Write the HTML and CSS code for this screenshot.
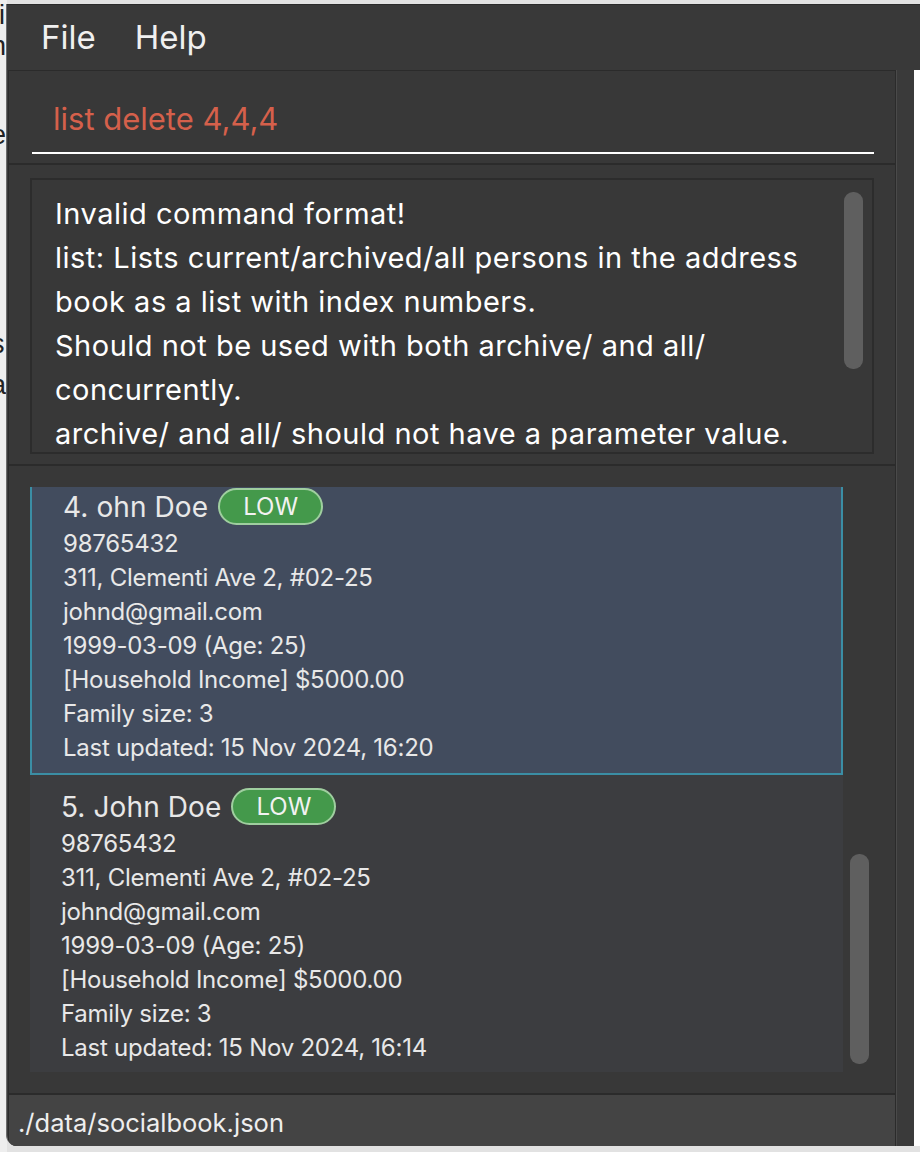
FILE: index.html
```html
<!DOCTYPE html>
<html lang="en">
<head>
<meta charset="utf-8">
<title>SocialBook</title>
<link rel="stylesheet" href="styles.css">
</head>
<body>
<div class="behind">
  <span class="b1">i</span>
  <span class="b2">n</span>
  <span class="b3">e</span>
  <span class="b4">s</span>
  <span class="b5">a</span>
</div>
<div class="window">
  <div class="menubar">
    <span class="menu-item">File</span>
    <span class="menu-item">Help</span>
  </div>
  <div class="main">
    <div class="panels">
      <div class="panel command-panel">
        <div class="command-input">list delete 4,4,4</div>
      </div>
      <div class="panel result-panel">
        <div class="result-box">
          <div class="result-text">Invalid command format!<br>list: Lists current/archived/all persons in the address<br>book as a list with index numbers.<br>Should not be used with both archive/ and all/<br>concurrently.<br>archive/ and all/ should not have a parameter value.<br>Example: list archive/</div>
          <div class="thumb result-thumb"></div>
        </div>
      </div>
      <div class="panel list-panel">
        <div class="list-view">
          <div class="cards">
            <div class="card selected">
              <div class="card-title"><span class="name">4. ohn Doe</span><span class="badge">LOW</span></div>
              <div class="fields">
                <div class="field">98765432</div>
                <div class="field">311, Clementi Ave 2, #02-25</div>
                <div class="field">johnd@gmail.com</div>
                <div class="field">1999-03-09 (Age: 25)</div>
                <div class="field">[Household Income] $5000.00</div>
                <div class="field">Family size: 3</div>
                <div class="field">Last updated: 15 Nov 2024, 16:20</div>
              </div>
            </div>
            <div class="card">
              <div class="card-title"><span class="name">5. John Doe</span><span class="badge">LOW</span></div>
              <div class="fields">
                <div class="field">98765432</div>
                <div class="field">311, Clementi Ave 2, #02-25</div>
                <div class="field">johnd@gmail.com</div>
                <div class="field">1999-03-09 (Age: 25)</div>
                <div class="field">[Household Income] $5000.00</div>
                <div class="field">Family size: 3</div>
                <div class="field">Last updated: 15 Nov 2024, 16:14</div>
              </div>
            </div>
          </div>
          <div class="vscroll"><div class="thumb list-thumb"></div></div>
        </div>
      </div>
      <div class="status-bar">./data/socialbook.json</div>
    </div>
    <div class="right-col"></div>
    <div class="filler"></div>
  </div>
</div>
</body>
</html>
```
FILE: styles.css
```css
* { box-sizing: border-box; margin: 0; padding: 0; }
html, body { width: 920px; height: 1152px; overflow: hidden; }
body {
  background: #e2e2e2;
  font-family: Inter, "Noto Sans", sans-serif;
  position: relative;
}
.behind {
  position: absolute;
  left: 0;
  top: 0;
  width: 7px;
  height: 1152px;
  background: #eeeeee;
  overflow: hidden;
  font-family: "Liberation Sans", sans-serif;
  font-size: 27px;
  color: #222;
}
.behind span { position: absolute; line-height: 1; }
.behind .b1 { left: -1px; top: 2px; }
.behind .b2 { left: -9px; top: 33px; }
.behind .b3 { left: -9px; top: 122px; }
.behind .b4 { left: -9px; top: 331px; }
.behind .b5 { left: -9px; top: 372px; }

.window {
  position: absolute;
  left: 6px;
  top: 4px;
  width: 914px;
  height: 1142px;
  border-left: 1px solid #6c6c6c;
  border-bottom-left-radius: 11px;
  overflow: hidden;
  display: flex;
  flex-direction: column;
  background: #3a3a3a;
}
.menubar {
  height: 66px;
  flex: none;
  display: flex;
  align-items: center;
  gap: 39px;
  padding-left: 34px;
  padding-bottom: 2px;
  border-top: 1px solid #2b2b2b;
  background: #393939;
}
.menu-item { font-size: 33px; color: #f0f0f0; }

.main { flex: 1; display: flex; min-height: 0; }
.panels {
  width: 888px;
  margin-left: 1px;
  border-left: 1px solid #2b2b2b;
  border-right: 1px solid #2b2b2b;
  display: flex;
  flex-direction: column;
  background: #383838;
}
.right-col {
  width: 18px;
  border-left: 1px solid #4a4a4a;
  background: #3a3a3a;
}
.filler { width: 6px; background: #ffffff; }

.panel { background: #383838; flex: none; }
.command-panel {
  height: 95px;
  border-top: 1px solid #2b2b2b;
  border-bottom: 2px solid #2b2b2b;
  padding: 24px 0 0 23px;
}
.command-input {
  width: 842px;
  height: 59px;
  padding-left: 21px;
  border-bottom: 2px solid #ffffff;
  font-size: 31px;
  line-height: 48px;
  color: #d5604b;
}

.result-panel {
  height: 301px;
  border-bottom: 2px solid #2b2b2b;
  padding: 13px 0 0 21px;
}
.result-box {
  position: relative;
  width: 844px;
  height: 276px;
  border: 2px solid #2c2c2c;
  overflow: hidden;
}
.result-text {
  padding: 12px 0 0 23px;
  font-size: 29px;
  letter-spacing: 0.5px;
  line-height: 44px;
  color: #ffffff;
}
.thumb { background: #5f5f5f; border-radius: 9px; }
.result-thumb {
  position: absolute;
  right: 9px;
  top: 12px;
  width: 19px;
  height: 177px;
}

.list-panel {
  height: 629px;
  border-bottom: 2px solid #2b2b2b;
  padding: 21px 0 0 21px;
}
.list-view {
  display: flex;
  height: 585px;
  overflow: hidden;
}
.cards { width: 813px; display: flex; flex-direction: column; }
.card {
  background: #3c3d40;
  padding: 12px 0 7px 31px;
  color: #e8e8e8;
}
.card.selected {
  background: #424c5e;
  border: 2px solid #3b8ea5;
  border-top: none;
  padding: 0 0 8px 31px;
}
.card-title {
  height: 38px;
  display: flex;
  align-items: center;
  gap: 10px;
}
.name { font-size: 28px; padding-top: 2px; letter-spacing: 0.1px; }
.badge {
  height: 37px;
  padding: 0 23px;
  border: 2px solid #9fce9f;
  border-radius: 19px;
  background: #44994b;
  color: #f2f2f2;
  font-size: 24px;
  line-height: 34px;
}
.fields { padding-top: 2px; }
.field { font-size: 24px; line-height: 34px; letter-spacing: -0.25px; }
.vscroll { width: 19px; margin-left: 7px; padding-top: 367px; }
.list-thumb { width: 19px; height: 210px; }

.status-bar {
  flex: 1;
  background: #444444;
  padding-left: 9px;
  padding-top: 2px;
  font-size: 25.5px;
  line-height: 51px;
  color: #eeeeee;
}
```
